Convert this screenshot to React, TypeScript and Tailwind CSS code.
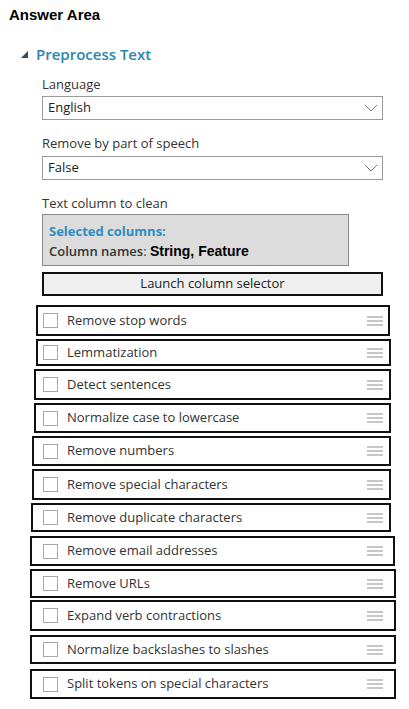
const options = [
  { label: "Remove stop words", box: "mt-[9px] ml-[36px] w-[354px] h-[31px] pl-[5px] pr-[5px]" },
  { label: "Lemmatization", box: "mt-[3px] ml-[36px] w-[355px] h-[27px] pl-[5px] pr-[6px]" },
  { label: "Detect sentences", box: "mt-[3px] ml-[34px] w-[357px] h-[31px] pl-[7px] pr-[6px]" },
  { label: "Normalize case to lowercase", box: "mt-[3px] ml-[34px] w-[357px] h-[30px] pl-[7px] pr-[6px]" },
  { label: "Remove numbers", box: "mt-[3px] ml-[32px] w-[359px] h-[30px] pl-[9px] pr-[6px]" },
  { label: "Remove special characters", box: "mt-[3px] ml-[32px] w-[359px] h-[31px] pl-[9px] pr-[6px]" },
  { label: "Remove duplicate characters", box: "mt-[3px] ml-[31px] w-[360px] h-[29px] pl-[10px] pr-[6px]" },
  { label: "Remove email addresses", box: "mt-[4px] ml-[30px] w-[365px] h-[30px] pl-[11px] pr-[10px]" },
  { label: "Remove URLs", box: "mt-[3px] ml-[30px] w-[366px] h-[29px] pl-[11px] pr-[11px]" },
  { label: "Expand verb contractions", box: "mt-[2px] ml-[30px] w-[366px] h-[31px] pl-[11px] pr-[11px]" },
  { label: "Normalize backslashes to slashes", box: "mt-[4px] ml-[30px] w-[366px] h-[29px] pl-[11px] pr-[11px]" },
  { label: "Split tokens on special characters", box: "mt-[5px] ml-[30px] w-[366px] h-[30px] pl-[11px] pr-[11px]" },
];

const ui = { fontFamily: '"Segoe UI", "Open Sans", "Noto Sans", sans-serif' };

function Select({ value }: { value: string }) {
  return (
    <div className="ml-[42px] w-[341px] h-[24px] border border-[#9a9a9a] bg-white flex items-center justify-between pl-[5px] pr-[3px] text-[13px] text-[#222]">
      <span>{value}</span>
      <svg width="14" height="8" viewBox="0 0 14 8" className="mr-[1px]">
        <path d="M1 1 L7 7 L13 1" fill="none" stroke="#777" strokeWidth="1" />
      </svg>
    </div>
  );
}

function Grip() {
  return (
    <div className="flex flex-col gap-[2px] w-[16px]">
      <div className="h-[2px] bg-[#c6c6c6]" />
      <div className="h-[2px] bg-[#c6c6c6]" />
      <div className="h-[2px] bg-[#c6c6c6]" />
    </div>
  );
}

export default function App() {
  return (
    <div className="w-[409px] h-[709px] bg-white overflow-hidden" style={ui}>
      <div
        className="pt-[5px] pl-[9px] h-[25px] leading-[20px] text-[15px] font-bold text-black"
        style={{ fontFamily: '"Liberation Sans", Arial, sans-serif' }}
      >
        Answer Area
      </div>

      <div className="mt-[19px] h-[20px] flex items-center pl-[21px] text-[15px] font-semibold text-[#2c85ad]">
        <svg width="8" height="8" viewBox="0 0 8 8" className="mr-[7px] mt-[2px]">
          <path d="M7 0 L7 7 L0 7 Z" fill="#3a4a56" />
        </svg>
        Preprocess Text
      </div>

      <div className="mt-[11px] ml-[42px] h-[18px] leading-[18px] text-[13px] text-[#333]">Language</div>
      <div className="mt-[3px]">
        <Select value="English" />
      </div>

      <div className="mt-[14px] ml-[42px] h-[18px] leading-[18px] text-[13px] text-[#333]">Remove by part of speech</div>
      <div className="mt-[4px]">
        <Select value="False" />
      </div>

      <div className="mt-[14px] ml-[42px] h-[18px] leading-[18px] text-[13px] text-[#333]">Text column to clean</div>
      <div className="mt-[2px] ml-[42px] w-[307px] h-[52px] bg-[#dcdcdc] border border-[#8a8a8a] pl-[6px] pt-[6px] flex flex-col">
        <div className="h-[20px] leading-[20px] text-[13px] font-bold text-[#2f8cc0]">Selected columns:</div>
        <div className="h-[20px] leading-[20px] text-[13px] text-[#222] flex items-center">
          <span className="font-semibold text-[#333]">Column names</span>
          <span className="text-[#333]">:&nbsp;</span>
          <span
            className="font-bold text-black text-[14px]"
            style={{ fontFamily: '"Liberation Sans", Arial, sans-serif' }}
          >
            String, Feature
          </span>
        </div>
      </div>

      <div className="mt-[6px] ml-[42px] w-[341px] h-[24px] border-2 border-[#111] bg-[#efefef] flex items-center justify-center text-[13px] text-[#222]">
        Launch column selector
      </div>

      {options.map((o) => (
        <div
          key={o.label}
          className={`${o.box} border-2 border-[#111] bg-white flex items-center justify-between`}
        >
          <div className="flex items-center">
            <div className="w-[15px] h-[15px] border border-[#a8a8a8] bg-white" />
            <span className="ml-[9px] text-[13px] text-[#333]">{o.label}</span>
          </div>
          <Grip />
        </div>
      ))}
    </div>
  );
}
